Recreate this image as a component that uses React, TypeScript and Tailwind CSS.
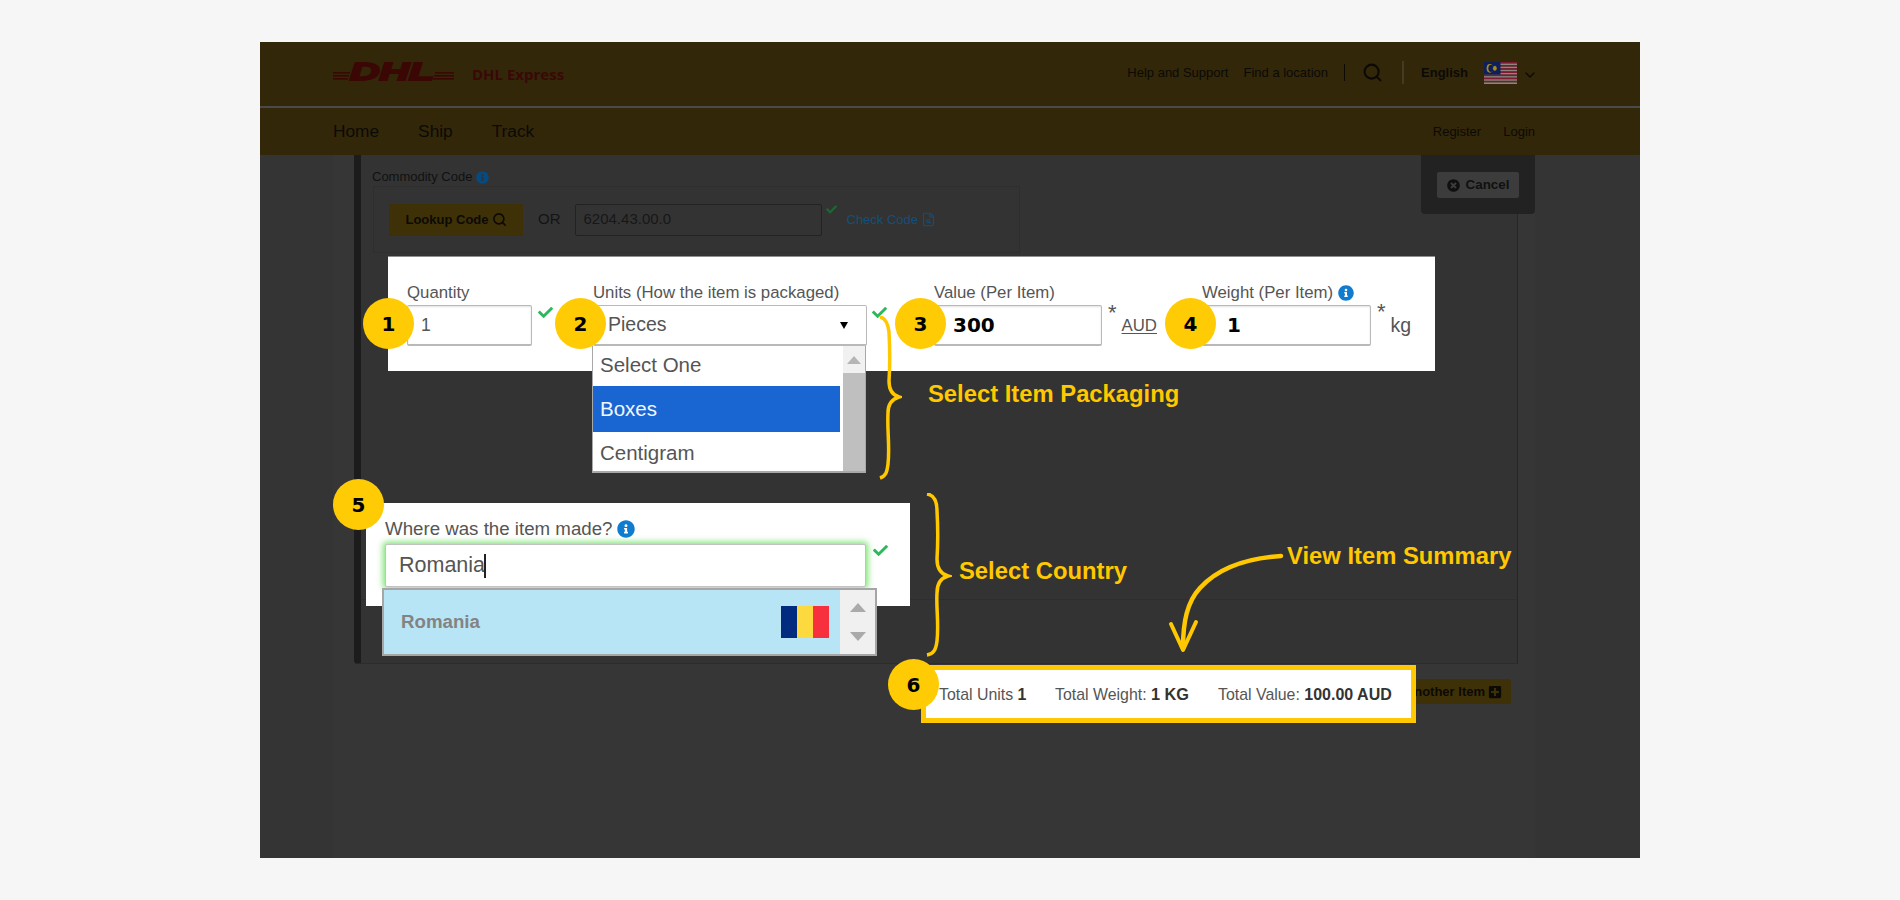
import React from "react";
import { Search, ChevronDown, FileSearch } from "lucide-react";
import { FaCheck, FaInfoCircle, FaTimesCircle, FaPlusSquare } from "react-icons/fa";

const sans = "font-['Liberation_Sans',Arial,sans-serif]";

function Badge({ n, pos }: { n: number; pos: string }) {
  return (
    <div className={`absolute ${pos} w-[51px] h-[51px] rounded-full bg-[#ffcb05] flex items-center justify-center font-['DejaVu_Sans',sans-serif] font-bold text-[20px] text-black`}>
      {n}
    </div>
  );
}

function Check({ cls }: { cls: string }) {
  return <FaCheck className={`${cls} text-[#2eb85c] w-[15px] h-[15px] shrink-0`} />;
}

function Field({ label, value, w, cls, boldValue, valuePad, info }: { label: string; value: string; w: string; cls?: string; boldValue?: boolean; valuePad?: string; info?: boolean }) {
  return (
    <div className={`${w} ${cls ?? ""} shrink-0`}>
      <div className="h-[20px] flex items-center text-[16.8px] text-[#555] whitespace-nowrap">
        {label}
        {info && <FaInfoCircle className="ml-[5px] w-[16px] h-[16px] text-[#0f7ccf]" />}
      </div>
      <div className={`mt-[2px] h-[41px] border border-[#b9b9b9] border-b-[2px] rounded-[2px] shadow-[inset_0_1px_2px_rgba(0,0,0,0.12)] flex items-center ${valuePad ?? "pl-[13px]"} ${boldValue ? "font-['DejaVu_Sans',sans-serif] font-bold text-[20px] text-black" : "text-[17.5px] text-[#555]"}`}>
        {value}
      </div>
    </div>
  );
}

function Logo() {
  return (
    <svg width="122" height="32" viewBox="0 0 122 32" className="shrink-0 -mt-[10px]">
      <g fill="#3a0705">
        <rect x="0" y="19" width="17" height="1.6" />
        <rect x="0" y="22" width="16" height="1.6" />
        <rect x="0" y="25" width="15" height="1.6" />
        <rect x="102" y="19" width="19" height="1.6" />
        <rect x="101" y="22" width="20" height="1.6" />
        <rect x="100" y="25" width="21" height="1.6" />
        <text x="17" y="27" fontFamily="Liberation Sans" fontWeight="700" fontStyle="italic" fontSize="24" textLength="84" lengthAdjust="spacingAndGlyphs" stroke="#3a0705" strokeWidth="2">DHL</text>
      </g>
    </svg>
  );
}

function MalaysiaFlag() {
  const stripes = [0, 1, 2, 3, 4, 5, 6, 7, 8, 9, 10, 11, 12, 13];
  return (
    <svg width="33" height="22" viewBox="0 0 28 14" preserveAspectRatio="none" className="shrink-0">
      {stripes.map((i) => (
        <rect key={i} x="0" y={i} width="28" height="1" fill={i % 2 === 0 ? "#7b1c34" : "#8f8480"} />
      ))}
      <rect x="0" y="0" width="14" height="8" fill="#0f1f5c" />
      <circle cx="5" cy="4" r="2.8" fill="#a58c1e" />
      <circle cx="6" cy="4" r="2.3" fill="#0f1f5c" />
      <circle cx="9.2" cy="4" r="1.6" fill="#a58c1e" />
    </svg>
  );
}

function RomaniaFlag() {
  return (
    <div className="flex w-[48px] h-[32px] shrink-0">
      <div className="flex-1 bg-[#002b7f]" />
      <div className="flex-1 bg-[#fcd93f]" />
      <div className="flex-1 bg-[#f8303e]" />
    </div>
  );
}

export default function App() {
  return (
    <div className={`w-[1900px] h-[900px] bg-[#f6f6f6] pt-[42px] pl-[260px] overflow-hidden ${sans}`}>
      <div className="w-[1380px] h-[816px] flex flex-col">
        {/* top bar */}
        <header className="h-[64px] bg-[#33270a] flex items-center pl-[73px] pr-[105px] text-[#0c0a05] shrink-0">
          <div className="flex items-center">
            <Logo />
            <span className="ml-[17px] font-['Open_Sans',sans-serif] font-bold text-[15px] text-[#3a0806]">DHL Express</span>
          </div>
          <div className="ml-auto flex items-center text-[13px] -mt-[3px]">
            <span>Help and Support</span>
            <span className="ml-[15px]">Find a location</span>
            <span className="ml-[16px] w-px h-[17px] bg-[#0c0a05]" />
            <Search className="ml-[17px] w-[21px] h-[21px]" strokeWidth={2.4} />
            <span className="ml-[19px] w-[2px] h-[23px] bg-[#463a22]" />
            <span className="ml-[17px] font-bold">English</span>
            <span className="ml-[16px]"><MalaysiaFlag /></span>
            <ChevronDown className="ml-[5px] -mr-[3px] w-[16px] h-[16px] mt-[4px]" strokeWidth={2} />
          </div>
        </header>
        <div className="h-[2px] bg-[#4a4a4a] shrink-0" />
        <nav className="h-[47px] bg-[#33270a] flex items-center pl-[73px] pr-[105px] text-[#0c0a05] shrink-0">
          <span className="text-[17.3px]">Home</span>
          <span className="ml-[39px] text-[17.3px]">Ship</span>
          <span className="ml-[39px] text-[17.3px]">Track</span>
          <span className="ml-auto mt-[1px] text-[13px]">Register</span>
          <span className="ml-[22px] mt-[1px] text-[13px]">Login</span>
        </nav>

        {/* page under the overlay */}
        <main className="relative flex-1 bg-[#343434]">
          <div className="ml-[73px] w-[1202px] h-full bg-[#363636] pl-[21px]">
            <section className="relative w-[1164px] h-[509px] bg-[#333333] border-l-[7px] border-l-[#1c1c1c] border-r border-b border-r-[#262626] border-b-[#2c2c2c] rounded-bl-[4px]">
              <div className="absolute left-0 right-0 top-[444px] h-px bg-[#2e2e2e]" />
              <div className="pl-[11px] pt-[13px] h-[31px] flex items-center text-[13px] text-[#111]">
                Commodity Code
                <FaInfoCircle className="ml-[4px] w-[13px] h-[13px] text-[#064a80]" />
              </div>
              <div className="ml-[12px] w-[647px] h-[67px] border border-[#2e2e2e] pl-[15px] flex items-center">
                <button className="w-[134px] h-[32px] rounded-[2px] bg-[#3f3107] flex items-center justify-center text-[13px] font-bold text-[#0c0a05]">
                  Lookup Code
                  <Search className="ml-[3px] w-[15px] h-[15px]" strokeWidth={2.6} />
                </button>
                <span className="ml-[15px] text-[15px] text-[#141414]">OR</span>
                <div className="ml-[14px] w-[247px] h-[32px] border border-[#222] rounded-[2px] flex items-center pl-[8px] text-[15px] text-[#171717]">6204.43.00.0</div>
                <FaCheck className="ml-[3px] -mt-[20px] w-[13px] h-[11px] text-[#1a6a30]" />
                <span className="ml-[9px] text-[13px] text-[#134f7a] whitespace-nowrap">Check Code</span>
                <FileSearch className="ml-[3px] w-[15px] h-[15px] text-[#134f7a]" strokeWidth={1.8} />
              </div>

              {/* highlighted quantity row */}
              <div className="ml-[27px] mt-[3px] w-[1047px] h-[115px] bg-white border-t border-[#8f8f8f] pl-[19px] pt-[26px] flex items-start">
                <Field label="Quantity" value="1" w="w-[125px]" />
                <Check cls="ml-[6px] mt-[22px]" />
                <div className="relative ml-[40px] shrink-0">
                  <div className="w-[274px]">
                    <div className="h-[20px] flex items-center text-[16.8px] text-[#555] whitespace-nowrap">Units (How the item is packaged)</div>
                    <div className="mt-[2px] h-[41px] border border-[#b9b9b9] border-b-[2px] rounded-[2px] flex items-center pl-[14px] pr-[18px] justify-between text-[19.5px] text-[#555]">
                      Pieces
                      <span className="w-0 h-0 border-l-[4px] border-r-[4px] border-t-[7px] border-l-transparent border-r-transparent border-t-black" />
                    </div>
                  </div>
                  <div className="absolute top-full left-[-1px] w-[274px] h-[127px] bg-white border-b-2 border-x border-[#a8a8a8] flex z-10">
                    <div className="w-[247px] text-[20.5px]">
                      <div className="h-[40px] pl-[7px] pb-[1px] flex items-center text-[#555]">Select One</div>
                      <div className="h-[46px] pl-[7px] flex items-center text-[#f2f6ff] bg-[#1966d2]">Boxes</div>
                      <div className="h-[39px] pl-[7px] pt-[3px] flex items-center text-[#555]">Centigram</div>
                    </div>
                    <div className="ml-[3px] w-[22px] bg-[#f1f1f1] flex flex-col">
                      <div className="h-[27px] flex justify-center pt-[10px]">
                        <span className="w-0 h-0 border-l-[7px] border-r-[7px] border-b-[8px] border-l-transparent border-r-transparent border-b-[#b5b5b5]" />
                      </div>
                      <div className="flex-1 bg-[#bfbfbf]" />
                    </div>
                  </div>
                </div>
                <Check cls="ml-[5px] mt-[22px]" />
                <Field label="Value (Per Item)" value="300" w="w-[168px]" cls="ml-[47px]" boldValue valuePad="pl-[18px]" />
                <span className="ml-[6px] mt-[20px] text-[22px] leading-[20px] text-[#555]">*</span>
                <span className="ml-[5px] mt-[30px] h-[22px] text-[16.8px] text-[#555] underline underline-offset-2">AUD</span>
                <Field label="Weight (Per Item)" value="1" w="w-[169px]" cls="ml-[45px]" boldValue valuePad="pl-[24px]" info />
                <span className="ml-[6px] mt-[19px] text-[22px] leading-[20px] text-[#555]">*</span>
                <span className="ml-[5px] mt-[28px] h-[22px] text-[19.5px] text-[#555]">kg</span>
              </div>

              {/* highlighted country row */}
              <div className="ml-[5px] mt-[132px] w-[544px] h-[103px] bg-white pl-[19px] pt-[16px] relative">
                <div className="h-[20px] flex items-center text-[18.7px] text-[#555]">
                  Where was the item made?
                  <FaInfoCircle className="ml-[5px] w-[18px] h-[18px] text-[#0f7ccf]" />
                </div>
                <div className="mt-[5px] flex">
                  <div className="relative w-[481px] h-[43px] border border-[#c2c2c2] rounded-[2px] shadow-[0_0_6px_2px_rgba(110,225,100,0.9)] flex items-center pl-[13px] text-[21.5px] text-[#555] bg-white">
                    Romania
                    <span className="ml-[-1px] w-[2px] h-[24px] bg-[#222]" />
                    <div className="absolute top-[43px] left-[-4px] w-[495px] h-[68px] border-2 border-[#a6a6a6] bg-[#b8e5f5] flex z-10">
                      <div className="flex-1 flex items-center pl-[17px] pr-[11px] justify-between">
                        <span className="font-bold text-[18.7px] text-[#838383]">Romania</span>
                        <RomaniaFlag />
                      </div>
                      <div className="w-[35px] bg-[#f0f0f0] flex flex-col items-center justify-between py-[13px]">
                        <span className="w-0 h-0 border-l-[8px] border-r-[8px] border-b-[9px] border-l-transparent border-r-transparent border-b-[#aaaaaa]" />
                        <span className="w-0 h-0 border-l-[8px] border-r-[8px] border-t-[9px] border-l-transparent border-r-transparent border-t-[#aaaaaa]" />
                      </div>
                    </div>
                  </div>
                  <Check cls="ml-[7px] -mt-[1px]" />
                </div>
              </div>
            </section>
            <div className="w-[1157px] mt-[15px] flex justify-end">
              <button className="h-[25px] w-[170px] pr-[9px] rounded-[2px] bg-[#3f3107] flex items-center justify-end text-[13px] font-bold text-[#0c0a05]">
                Another Item
                <FaPlusSquare className="ml-[3px] w-[14px] h-[14px]" />
              </button>
            </div>
          </div>

          {/* cancel tab */}
          <div className="absolute left-[1161px] top-0 w-[114px] h-[59px] bg-[#222] rounded-b-[4px] pl-[16px] pt-[17px]">
            <button className="w-[82px] h-[26px] bg-[#3c3c3c] rounded-[2px] flex items-center justify-center text-[13.4px] font-bold text-[#101010]">
              <FaTimesCircle className="mr-[6px] w-[13px] h-[13px]" />
              Cancel
            </button>
          </div>

          {/* summary callout */}
          <div className="absolute left-[661px] top-[510px] w-[495px] h-[58px] border-[5px] border-[#ffc800] bg-white flex items-center pl-[13px] pt-[1px] text-[15.9px] text-[#555] whitespace-nowrap z-10">
            <span className="w-[116px]">Total Units <b className="text-[#333]">1</b></span>
            <span className="w-[163px]">Total Weight: <b className="text-[16.3px] text-[#333]">1 KG</b></span>
            <span>Total Value: <b className="text-[16px] text-[#333]">100.00 AUD</b></span>
          </div>

          <Badge n={1} pos="left-[103px] top-[143px] z-20" />
          <Badge n={2} pos="left-[295px] top-[143px] z-20" />
          <Badge n={3} pos="left-[635px] top-[143px] z-20" />
          <Badge n={4} pos="left-[905px] top-[143px] z-20" />
          <Badge n={5} pos="left-[73px] top-[324px] z-20" />
          <Badge n={6} pos="left-[628px] top-[504px] z-20" />

          {/* braces, arrow and captions */}
          <svg className="absolute left-[618px] top-[161px] z-20" width="24" height="164" viewBox="0 0 24 164" fill="none">
            <path d="M2 1 C8 2 10 8 11 16 C12 35 12 50 11 65 C11 74 14 79 21 81 C14 83 10 88 10 97 C9 115 12 130 10 148 C9 156 8 160 2 162" stroke="#ffc800" strokeWidth="3.5" />
          </svg>
          <svg className="absolute left-[665px] top-[338px] z-20" width="27" height="164" viewBox="0 0 27 164" fill="none">
            <path d="M2 1 C9 2 12 8 12 18 C13 35 13 50 12 66 C12 76 16 81 23 83 C16 85 12 90 12 100 C11 115 14 130 12 148 C11 156 9 161 2 162" stroke="#ffc800" strokeWidth="3.5" />
          </svg>
          <svg className="absolute left-[905px] top-[395px] z-20" width="120" height="105" viewBox="0 0 120 105" fill="none">
            <path d="M116 6 C85 8 55 16 35 38 C22 52 18 72 18 98" stroke="#ffc800" strokeWidth="4.5" strokeLinecap="round" />
            <path d="M6 74 L18 100 L31 72" stroke="#ffc800" strokeWidth="4" strokeLinecap="round" strokeLinejoin="round" />
          </svg>
          <div className="absolute left-[668px] top-[225px] text-[23.8px] leading-[28px] font-bold text-[#ffc800] whitespace-nowrap z-20">Select Item Packaging</div>
          <div className="absolute left-[699px] top-[402px] text-[23.8px] leading-[28px] font-bold text-[#ffc800] whitespace-nowrap z-20">Select Country</div>
          <div className="absolute left-[1027px] top-[387px] text-[23.8px] leading-[28px] font-bold text-[#ffc800] whitespace-nowrap z-20">View Item Summary</div>
        </main>
      </div>
    </div>
  );
}
